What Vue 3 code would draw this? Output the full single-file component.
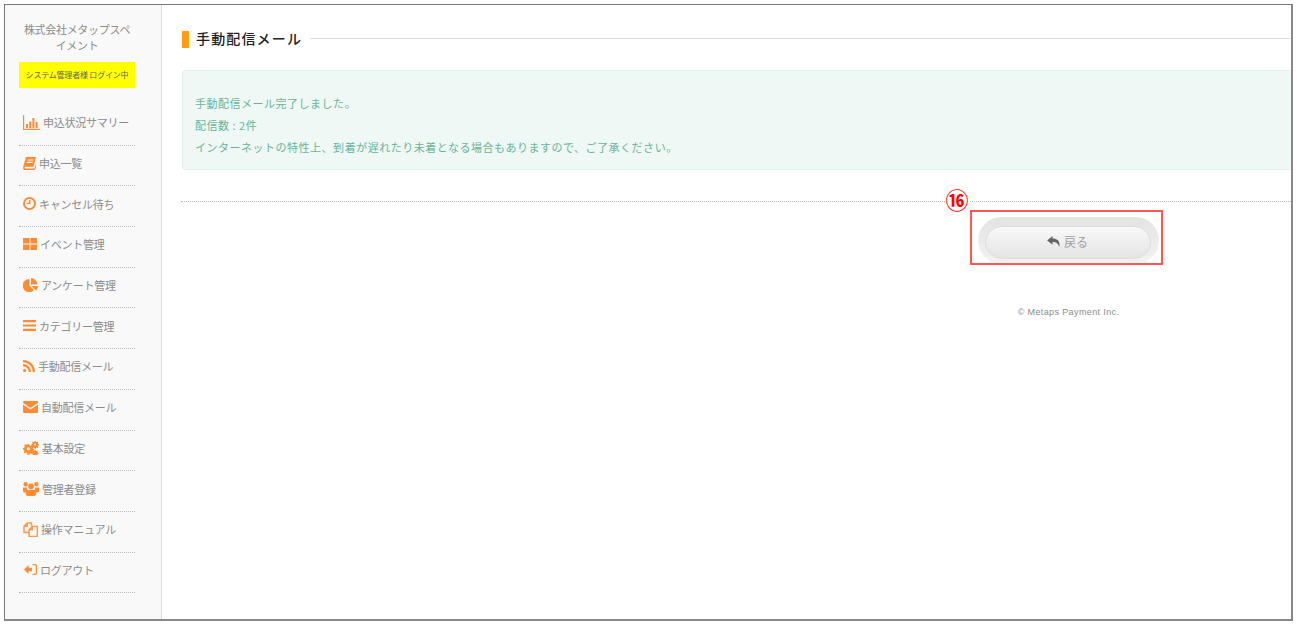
<script setup>
const menu = [
  { label: '申込状況サマリー', w: 17, vb: '0 0 17 15', d: 'M0 0h1.2v13.8H17V15H0zM3 9h2v4H3zM6.2 6.5h2V13h-2zM9.4 3h2v10h-2zM12.6 7h2v6h-2z' },
  { label: '申込一覧', w: 13, vb: '0 0 14 14', d: 'M3.2 0H14l-2.6 10.4H2.6c-1 0-1.3 1.9 0 1.9h9.8L14 6.8V11l-1.2 3H2.2C.4 14-.3 12.4.2 10.8zM5 2.6l-.3 1.2h6.2l.3-1.2zM4.3 5.2 4 6.4h6.2l.3-1.2z' },
  { label: 'キャンセル待ち', w: 13, vb: '0 0 13 13', d: 'M6.5 0a6.5 6.5 0 1 1 0 13 6.5 6.5 0 0 1 0-13zm0 2a4.5 4.5 0 1 0 0 9 4.5 4.5 0 0 0 0-9zM6 3h1.4v4H3.6V5.8H6z' },
  { label: 'イベント管理', w: 14, vb: '0 0 14 12', d: 'M0 0h6.5v5.5H0zM7.5 0H14v5.5H7.5zM0 6.5h6.5V12H0zM7.5 6.5H14V12H7.5z' },
  { label: 'アンケート管理', w: 15, vb: '0 0 15 14', d: 'M6.4 1v6.6l4.6 4.6A6.6 6.6 0 1 1 6.4 1zM8 0a6.6 6.6 0 0 1 6.4 6.4H8zM8.4 8H15a6.6 6.6 0 0 1-2 4.6z' },
  { label: 'カテゴリー管理', w: 13, vb: '0 0 13 11', d: 'M0 0h13v2.2H0zM0 4.4h13v2.2H0zM0 8.8h13V11H0z' },
  { label: '手動配信メール', w: 12, vb: '0 0 12 12', d: 'M1.6 8.8a1.6 1.6 0 1 1 0 3.2 1.6 1.6 0 0 1 0-3.2zM0 4a8 8 0 0 1 8 8H5.8A5.8 5.8 0 0 0 0 6.2zM0 0a12 12 0 0 1 12 12H9.8A9.8 9.8 0 0 0 0 2.2z' },
  { label: '自動配信メール', w: 15, vb: '0 0 15 12', d: 'M1 0h13a1 1 0 0 1 1 1v.8L7.5 7 0 1.8V1a1 1 0 0 1 1-1zM0 3.4l7.5 5.2L15 3.4V11a1 1 0 0 1-1 1H1a1 1 0 0 1-1-1z' },
  { label: '基本設定', w: 16, vb: '0 0 16 14', d: 'M5 3.2 6 3l.6 1.3 1.2.5 1.3-.6.8.8-.6 1.3.5 1.2 1.3.6v1.2l-1.3.6-.5 1.2.6 1.3-.8.8-1.3-.6-1.2.5-.6 1.3H4.600L4 12.100l-1.200-.5-1.300.6-.8-.8.6-1.300-.5-1.200L0 8.300V7.100l1.300-.6.5-1.200-.6-1.300.8-.8 1.300.6L4 3.300zm.3 3a1.600 1.600 0 1 0 0 3.200 1.600 1.600 0 0 0 0-3.200zM12.600 0l.5 1 .9.1.7-.5.7.7-.5.8.2.8 1 .4v1l-1 .4-.2.8.5.8-.7.7-.8-.5-.8.2-.4 1h-1l-.4-1-.8-.2-.8.5-.7-.7.5-.8-.2-.8-1-.4v-1l1-.4.2-.8-.5-.8.7-.7.8.5.8-.2.4-1zm-.5 2.600a1 1 0 1 0 0 2 1 1 0 0 0 0-2zM12.500 9l.4.8.7.1.7-.4.6.6-.4.7.2.7.8.3v.9l-.8.3-.2.7.4.7-.6.6-.7-.4-.7.2-.3.8h-.9l-.3-.8-.7-.2-.7.4-.6-.6.4-.7-.2-.7-.8-.3v-.9l.8-.3.2-.7-.4-.7.6-.6.7.4.7-.1.3-.8z' },
  { label: '管理者登録', w: 16, vb: '0 0 16 14', d: 'M8 1.600a2.800 2.800 0 1 1 0 5.600 2.800 2.800 0 0 1 0-5.600zM2.600 0a2.200 2.200 0 1 1 0 4.400 2.200 2.200 0 0 1 0-4.400zM13.400 0a2.200 2.200 0 1 1 0 4.400 2.200 2.200 0 0 1 0-4.400zM0 5.400h3.800a4 4 0 0 0 1 2.600C3.400 8.500 2.700 9.400 2.500 10.500 1 10.500 0 10 0 9zM12.200 5.400H16V9c0 1-1 1.500-2.500 1.500-.2-1.100-.9-2-2.300-2.500a4 4 0 0 0 1-2.600zM5 8h6c1.700 0 2.400 1.400 2.400 3 0 2-1 3-2.400 3H5c-1.400 0-2.400-1-2.400-3 0-1.600.7-3 2.400-3z' },
  { label: '操作マニュアル', w: 15, vb: '0 0 15 15', stroke: true, d: 'M5.500 10.500H1V4.200L4.200 1H8.500v3M4.200 1v3.200H1M6 14.500V7.700L9.200 4.500H14.300V14.500zM9.200 4.500v3.200H6' },
  { label: 'ログアウト', w: 13, offset: true, vb: '0 0 13 11', d: 'M0 5.500 4.500 1v2.700H8v3.600H4.500V10zM8.500 0H11c1.200 0 2 .8 2 2v7c0 1.200-.8 2-2 2H8.500V9.700H11c.4 0 .7-.3.7-.7V2c0-.4-.3-.7-.7-.7H8.500z' },
]
</script>

<template>
  <div class="page">
    <div class="frame">
      <aside class="sidebar">
        <p class="company">株式会社メタップスペイメント</p>
        <p class="login-state">システム管理者様 ログイン中</p>
        <ul class="menu">
          <li v-for="item in menu" :key="item.label" class="menu-item">
            <svg
              :class="['menu-icon', { 'menu-icon-inset': item.offset }]"
              :width="item.w"
              :viewBox="item.vb"
              aria-hidden="true"
            >
              <path v-if="item.stroke" :d="item.d" fill="none" stroke="#ff9a4d" stroke-width="1.500" />
              <path v-else :d="item.d" fill="#ff8c33" />
            </svg>
            <span>{{ item.label }}</span>
          </li>
        </ul>
      </aside>

      <main class="main">
        <div class="content">
          <div class="heading">
            <h1 class="title">手動配信メール</h1>
            <span class="title-rule"></span>
          </div>
          <div class="alert">
            <p>手動配信メール完了しました。</p>
            <p>配信数 : 2件</p>
            <p>インターネットの特性上、到着が遅れたり未着となる場合もありますので、ご了承ください。</p>
          </div>
          <div class="actions">
            <div class="button-wrap">
              <div class="button-halo">
                <button class="button" type="button">
                  <svg width="13" height="11" viewBox="0 0 14 12" aria-hidden="true">
                    <path d="M6 0 0 4.800 6 9.600V6.500c3.600 0 6 1 7.200 5.500C14.500 6.500 12 2.800 6 2.800z" fill="#666" />
                  </svg>
                  <span>戻る</span>
                </button>
              </div>
              <span class="callout-number">⑯</span>
              <span class="callout-box"></span>
            </div>
          </div>
          <footer class="footer">© Metaps Payment Inc.</footer>
        </div>
      </main>
    </div>
  </div>
</template>

<style scoped>
.page {
  box-sizing: border-box;
  width: 1297px;
  height: 625px;
  padding: 4px;
  background: #fff;
  font-family: "Noto Sans CJK JP", "Noto Sans", sans-serif;
}
.frame {
  box-sizing: border-box;
  display: flex;
  width: 1289px;
  height: 617px;
  border: 1px solid #777;
  border-right: 2px solid #888;
  border-bottom: 2px solid #888;
  overflow: hidden;
}
.sidebar {
  box-sizing: border-box;
  flex: none;
  width: 157px;
  padding: 0 26px 0 14px;
  background: #f9f9f9;
  border-right: 1px solid #dcdcdc;
}
.company {
  margin: 16px 0 0;
  font-size: 11px;
  line-height: 16px;
  color: #8c8c8c;
  text-align: center;
  letter-spacing: -0.3px;
}
.login-state {
  margin: 9px 0 0;
  height: 26px;
  background: #ffff00;
  color: #666;
  font-size: 8px;
  line-height: 25px;
  text-align: center;
  white-space: nowrap;
  letter-spacing: -0.2px;
}
.menu {
  margin: 17px 0 0;
  padding: 0;
  list-style: none;
}
.menu-item {
  box-sizing: border-box;
  display: flex;
  align-items: center;
  gap: 3px;
  height: 40.7px;
  padding: 0 0 5px 4px;
  border-bottom: 1px dotted #bbb;
  font-size: 11px;
  letter-spacing: -0.25px;
  color: #8c8c8c;
  white-space: nowrap;
}
.menu-icon {
  flex: none;
}
.menu-icon-inset {
  margin-left: 1px;
}
.main {
  flex: 1;
  min-width: 0;
  overflow: hidden;
  background: #fff;
}
.content {
  box-sizing: border-box;
  width: 1793px;
  padding: 26px 0 0 20px;
}
.heading {
  display: flex;
  align-items: center;
  height: 17px;
}
.title {
  margin: 0;
  padding: 0 0 2px 7px;
  border-left: 7px solid #ff9c12;
  font-size: 14px;
  line-height: 15px;
  font-weight: 500;
  color: #222;
  letter-spacing: 1.15px;
}
.title-rule {
  flex: 1;
  margin: 0 0 3px 8px;
  border-top: 1px solid #ddd;
}
.alert {
  box-sizing: border-box;
  height: 100px;
  margin: 22px 0 0;
  padding: 21px 12px 0;
  background: #eff8f5;
  border: 1px solid #e0f0ea;
  border-radius: 3px;
  color: #68b49a;
  font-size: 11px;
  line-height: 22px;
  letter-spacing: 0.51px;
}
.alert p {
  margin: 0;
}
.actions {
  display: flex;
  justify-content: center;
  margin: 31px 0 0 -1px;
  padding-top: 15px;
  border-top: 1px dotted #bbb;
}
.button-wrap {
  position: relative;
}
.button-halo {
  box-sizing: border-box;
  width: 181px;
  height: 47px;
  padding: 9px 8px 5px 7px;
  border-radius: 24px;
  background: linear-gradient(#e3e3e3, #f3f3f3);
}
.button {
  box-sizing: border-box;
  display: flex;
  align-items: center;
  justify-content: center;
  gap: 4px;
  width: 100%;
  height: 33px;
  padding: 0 0 3px;
  border: 1px solid #dcdcdc;
  border-radius: 17px;
  background: linear-gradient(#f9f9f9, #e4e4e4);
  color: #a0a0a0;
  font-family: inherit;
  font-size: 12px;
}
.callout-number {
  position: absolute;
  left: -32px;
  top: -33px;
  font-size: 23px;
  line-height: 30px;
  font-weight: 700;
  color: #f00;
  background: #fff;
}
.callout-box {
  position: absolute;
  left: -8px;
  top: -7px;
  width: 193px;
  height: 55px;
  box-sizing: border-box;
  border: 2px solid #f55;
}
.footer {
  margin-top: 42px;
  text-align: center;
  font-family: "Liberation Sans", sans-serif;
  font-size: 9px;
  line-height: 12px;
  letter-spacing: 0.38px;
  color: #8c8c8c;
}
</style>
